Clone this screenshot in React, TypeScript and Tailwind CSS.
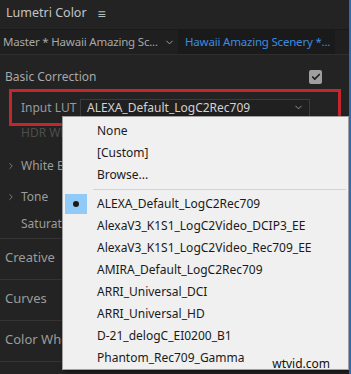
import { ChevronDown, ChevronRight, Check } from "lucide-react";

const luts = [
  "AlexaV3_K1S1_LogC2Video_DCIP3_EE",
  "AlexaV3_K1S1_LogC2Video_Rec709_EE",
  "AMIRA_Default_LogC2Rec709",
  "ARRI_Universal_DCI",
  "ARRI_Universal_HD",
  "D-21_delogC_EI0200_B1",
  "Phantom_Rec709_Gamma",
];

function LutMenu() {
  return (
    <div className="absolute left-[62px] top-[116px] w-[287px] h-[254px] bg-[#f0f0f0] border border-[#a0a0a0] shadow-[2px_2px_4px_rgba(0,0,0,0.5)] text-[12px] text-[#1a1a1a]">
      <div className="pt-[3px]">
        {["None", "[Custom]", "Browse..."].map((t) => (
          <div key={t} className="h-[22px] flex items-center pl-[34px]">{t}</div>
        ))}
      </div>
      <div className="ml-[30px] mr-[2px] my-[3px] h-px bg-[#d4d4d4]" />
      <div className="h-[22px] flex items-center">
        <div className="ml-[2px] w-[22px] h-[20px] bg-[#91c9f7] flex items-center justify-center">
          <div className="w-[6px] h-[6px] rounded-full bg-[#1a1a1a]" />
        </div>
        <span className="pl-[10px]">ALEXA_Default_LogC2Rec709</span>
      </div>
      {luts.map((t) => (
        <div key={t} className="h-[22px] flex items-center pl-[34px]">{t}</div>
      ))}
      <div className="absolute right-[18px] bottom-[-4px] text-[12px] text-[#111]">wtvid.com</div>
    </div>
  );
}

export default function App() {
  return (
    <div
      className="relative w-[351px] h-[374px] overflow-hidden bg-[#232323] border-r-2 border-[#2d6cb5] text-[12px] text-[#9c9c9c] whitespace-nowrap"
      style={{ fontFamily: "'Segoe UI', 'Noto Sans', 'Liberation Sans', sans-serif" }}
    >
      {/* header */}
      <div className="h-[30px] flex items-center gap-[11px] pl-[6px] pb-[3px] border-b border-[#1a1a1a] text-[#c4c4c4] text-[12.5px]">
        <span>Lumetri Color</span>
        <span className="text-[#bbb] text-[14px]">≡</span>
      </div>

      {/* tabs */}
      <div className="h-[25px] flex items-center bg-[#1f1f1f] border-b border-[#2e2e2e] text-[11.5px] tracking-[-0.2px]">
        <div className="w-[178px] shrink-0 flex items-center justify-between pl-[3px] pr-[3px] text-[#a8a8a8]">
          <span>Master * Hawaii Amazing Sc...</span>
          <ChevronDown size={11} />
        </div>
        <div className="w-[157px] shrink-0 h-full flex items-center pl-[7px] bg-[#1a1a1a] text-[#3d8be0]">Hawaii Amazing Scenery *...</div>
      </div>

      {/* basic correction */}
      <div className="h-[33px] flex items-center justify-between pl-[5px] pr-[27px] text-[#a8a8a8] pt-[10px]">
        <span>Basic Correction</span>
        <div className="w-[13px] h-[14px] rounded-[2px] bg-[#9f9f9f] flex items-center justify-center">
          <Check size={10} strokeWidth={4} className="text-[#1e1e1e]" />
        </div>
      </div>

      {/* input lut, highlighted */}
      <div className="mt-[1px] ml-[9px] w-[332px] h-[37px] border-[3px] border-[#c4262e] flex items-center">
        <span className="pl-[9px] w-[68px] text-[#9a9a9a]">Input LUT</span>
        <div className="w-[230px] h-[18px] border border-[#3c3c3c] bg-[#202020] flex items-center justify-between pl-[6px] pr-[5px] text-[#d2d2d2]">
          <span>ALEXA_Default_LogC2Rec709</span>
          <ChevronDown size={11} className="text-[#9a9a9a]" />
        </div>
      </div>

      <div className="h-[14px] flex items-center pl-[21px] text-[#4e4e4e]">HDR White</div>

      {/* tone groups */}
      <div className="mt-[12px] h-[28px] flex items-center">
        <ChevronRight size={10} className="ml-[6px] text-[#8a8a8a]" />
        <span className="ml-[5px]">White Balance</span>
      </div>
      <div className="mt-[3px] h-[28px] flex items-center">
        <ChevronRight size={10} className="ml-[6px] text-[#8a8a8a]" />
        <span className="ml-[5px]">Tone</span>
      </div>
      <div className="h-[26px] flex items-center pl-[21px]">Saturation</div>

      <div className="mt-[1px] border-t border-[#343434]">
        {["Creative", "Curves", "Color Wheels"].map((t) => (
          <div key={t} className="h-[41px] flex items-center pl-[5px] pb-[3px] border-b border-[#343434] text-[13px]">{t}</div>
        ))}
      </div>

      <LutMenu />
    </div>
  );
}
